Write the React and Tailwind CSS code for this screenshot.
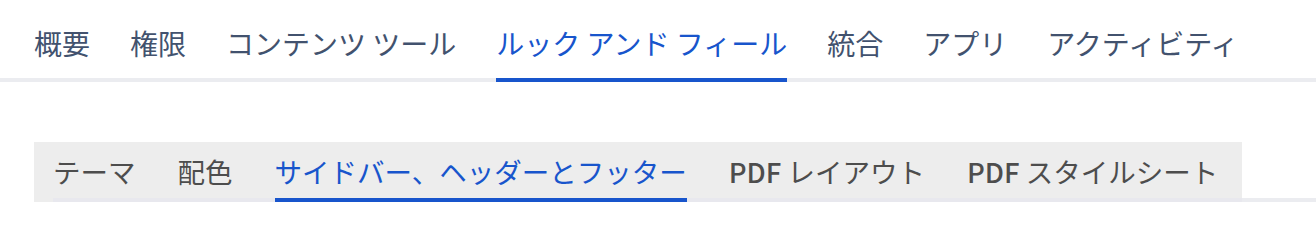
export default function App() {
  const top = ["概要", "権限", "コンテンツ ツール", "ルック アンド フィール", "統合", "アプリ", "アクティビティ"];
  const sub = [
    { label: "テーマ" },
    { label: "配色" },
    { label: "サイドバー、ヘッダーとフッター" },
    { pdf: true, label: " レイアウト" },
    { pdf: true, label: " スタイルシート" },
  ];
  const font = { fontFamily: '"Noto Sans CJK JP", "Noto Sans", sans-serif' };
  return (
    <div className="w-[1316px] h-[226px] bg-white overflow-hidden" style={font}>
      <div className="flex pl-[34px] pt-[23px] border-b-4 border-[#ebecf0]">
        {top.map((t, i) => (
          <div
            key={t}
            className={
              "mr-[40px] pb-[15px] -mb-[4px] border-b-4 text-[28px] leading-[40px] whitespace-pre " +
              (i === 3 ? "border-[#1855cc] text-[#1855cc]" : "border-transparent text-[#42526e]")
            }
          >
            {t}
          </div>
        ))}
      </div>
      <div className="flex ml-[34px] mt-[60px]">
        <div className="bg-[#ededed] pl-[19px]">
          <div className="flex border-b-4 border-[#e8e8ee] pr-[24px]">
            {sub.map((s, i) => (
              <div
                key={i}
                className={
                  "mr-[42px] last:mr-0 pt-[9px] pb-[7px] -mb-[4px] border-b-4 text-[27.5px] leading-[40px] whitespace-pre " +
                  (i === 2 ? "border-[#1855cc] text-[#1855cc]" : "border-transparent text-[#4d4d4d]")
                }
              >
                {s.pdf && <span className="font-medium">PDF</span>}
                {s.label}
              </div>
            ))}
          </div>
        </div>
        <div className="flex-1 self-end h-[4px] bg-[#ebecf0]" />
      </div>
    </div>
  );
}
